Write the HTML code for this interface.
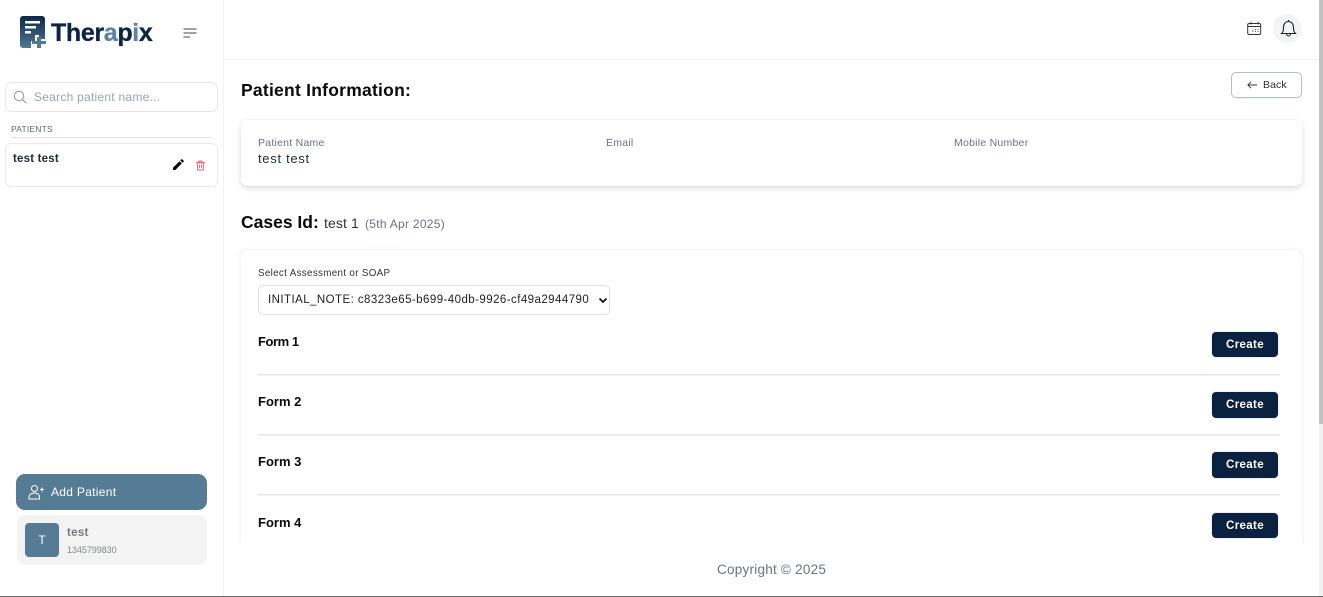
<!DOCTYPE html>
<html><head><meta charset="utf-8"><style>
*{box-sizing:border-box}
html,body{margin:0;padding:0;background:#fff}
body{width:1323px;height:597px;overflow:hidden;position:relative;font-family:"Liberation Sans",sans-serif;color:#000}
.a{position:absolute;white-space:nowrap}
.card{position:absolute;background:#fff;border-radius:7px}
.form{font-size:13px;font-weight:700;color:#0a0a0a;left:258px;letter-spacing:0}
.btn{position:absolute;left:1212px;width:66px;height:25px;background:#0a2240;border-radius:4px;color:#fff;font-size:11.5px;font-weight:700;text-align:center;line-height:26px;letter-spacing:.35px;box-shadow:0 0 0 1px #eceef2}
.hr{position:absolute;left:258px;width:1022px;height:1px;background:#e5e7eb;box-shadow:0 1px 0 #f0f1f4}
.lab{font-size:10.5px;color:#6b7280;top:137px;line-height:13px;letter-spacing:.25px}
</style></head><body>

<!-- sidebar -->
<div class="a" style="left:223px;top:0;width:1px;height:596px;background:#f1f2f4"></div>
<div class="a" style="left:224px;top:59px;width:1095px;height:1px;background:#f1f2f4"></div>

<svg class="a" style="left:20px;top:15px" width="26" height="34" viewBox="0 0 26 34">
<defs><linearGradient id="g" x1="0" y1="0" x2="0" y2="1"><stop offset="0" stop-color="#0d2746"/><stop offset="1" stop-color="#4f7a98"/></linearGradient></defs>
<path d="M3 1H22a3 3 0 0 1 3 3V24H19V20H15V26H11V33H3a3 3 0 0 1-3-3V4a3 3 0 0 1 3-3Z" fill="url(#g)"/>
<path d="M5 6H20V8.500H5ZM5 11H16V13.500H5ZM5 16H11V18.500H5Z" fill="#fff"/>
<path d="M17 22H21V26H26V29H21V33H17V29H12V26H17Z" fill="#4f7a98"/>
</svg>
<div class="a" style="left:51px;top:18px;font-size:25px;line-height:30px;font-weight:700;color:#0c2444;letter-spacing:-.35px;-webkit-text-stroke:.3px #0c2444">Ther<span style="color:#5b86a3;-webkit-text-stroke:.3px #5b86a3">a</span>p<span style="color:#5b86a3;-webkit-text-stroke:.3px #5b86a3">i</span>x</div>
<svg class="a" style="left:183px;top:28px" width="14" height="11" viewBox="0 0 14 11"><path d="M.5 1H13.500M.5 5H13.500M.5 9H7" stroke="#444" stroke-width="1" fill="none"/></svg>

<div class="a" style="left:5px;top:82px;width:213px;height:30px;border:1px solid #e2e5ea;border-radius:7px"></div>
<svg class="a" style="left:13px;top:90px" width="14" height="14" viewBox="0 0 14 14"><circle cx="6" cy="6" r="4.700" fill="none" stroke="#8a94a3" stroke-width="1"/><path d="M9.500 9.500L13 13" stroke="#8a94a3" stroke-width="1"/></svg>
<div class="a" style="left:34px;top:90px;font-size:12px;line-height:15px;color:#9aa2af;letter-spacing:.25px">Search patient name...</div>
<div class="a" style="left:11px;top:124px;font-size:8.500px;line-height:11px;color:#5f6875;letter-spacing:.2px">PATIENTS</div>
<div class="a" style="left:11px;top:137px;width:201px;height:1px;background:#e5e7eb"></div>
<div class="a" style="left:5px;top:143px;width:213px;height:44px;border:1px solid #e8eaee;border-radius:6px"></div>
<div class="a" style="left:13px;top:152px;font-size:11.500px;line-height:15px;font-weight:700;color:#1f2937;letter-spacing:.2px">test test</div>
<svg class="a" style="left:172px;top:159px" width="12" height="12" viewBox="0 0 12 12"><path d="M1 11V8.700L7.500 2.200L9.800 4.500L3.300 11ZM8.300 1.400L9.300.4a.7.7 0 0 1 1 0L11.600 1.700a.7.7 0 0 1 0 1L10.600 3.700Z" fill="#000"/></svg>
<svg class="a" style="left:195px;top:160px" width="11" height="11" viewBox="0 0 11 11"><path d="M1.200 2.500H9.800M4 2.500V1H7V2.500M2.200 2.500L2.700 10H8.300L8.800 2.500M4.400 4.500V8.300M6.600 4.500V8.300" fill="none" stroke="#ef5b5b" stroke-width=".9"/></svg>

<div class="a" style="left:16px;top:474px;width:191px;height:36px;background:#567b95;border-radius:9px"></div>
<svg class="a" style="left:28px;top:484px" width="16" height="16" viewBox="0 0 16 16"><circle cx="6.500" cy="4.500" r="3" fill="none" stroke="#fff" stroke-width="1"/><path d="M1 15V13.500C1 10.500 3.500 9 6.500 9S11.500 10.500 11.500 13.500V15ZM12 5.500H16M14 3.500V7.500" fill="none" stroke="#fff" stroke-width="1"/></svg>
<div class="a" style="left:51px;top:484px;font-size:12px;line-height:16px;color:#fff;letter-spacing:.3px">Add Patient</div>

<div class="a" style="left:17px;top:515px;width:190px;height:50px;background:#f3f3f4;border-radius:8px"></div>
<div class="a" style="left:25px;top:523px;width:34px;height:34px;background:#567b95;border-radius:4px;color:#fff;font-size:12px;text-align:center;line-height:34px">T</div>
<div class="a" style="left:67px;top:526px;font-size:11.500px;line-height:15px;font-weight:700;color:#777a80;letter-spacing:.3px">test</div>
<div class="a" style="left:67px;top:544px;font-size:9px;line-height:12px;color:#85888e;letter-spacing:-.05px">1345799830</div>

<!-- header icons -->
<svg class="a" style="left:1247px;top:21px" width="15" height="15" viewBox="0 0 15 15"><rect x=".7" y="2.500" width="13" height="11" rx="1.500" fill="none" stroke="#333" stroke-width="1"/><path d="M1 5.500H14M4 .8V3.500M11 .8V3.500" stroke="#333" stroke-width="1"/><path d="M5 10H6.500M8 8.500H9M8 10.500H9M10.500 8.500H11.500M10.500 10.500H11.500" stroke="#555" stroke-width="1"/></svg>
<div class="a" style="left:1273px;top:14px;width:29px;height:29px;border-radius:50%;background:#f3f4f6"></div>
<svg class="a" style="left:1280px;top:19px" width="17" height="18" viewBox="0 0 17 18"><path d="M1.500 14.500C3 13 3.500 12 3.500 8.500C3.500 5 5.500 2.500 8.500 2.500S13.500 5 13.500 8.500C13.500 12 14 13 15.500 14.500ZM6.500 14.500C6.500 16 7.500 17 8.500 17S10.500 16 10.500 14.500M8.500 2.500V1" fill="none" stroke="#222" stroke-width="1.100"/></svg>

<div class="a" style="left:1231px;top:72px;width:71px;height:26px;border:1px solid #b9bdc4;border-radius:5px;box-shadow:0 1px 1px rgba(0,0,0,.06)"></div>
<svg class="a" style="left:1247px;top:80px" width="10" height="10" viewBox="0 0 10 10"><path d="M10 5H.8M4 1.800L.8 5L4 8.200" fill="none" stroke="#333" stroke-width=".9"/></svg>
<div class="a" style="left:1263px;top:78px;font-size:10.500px;line-height:14px;color:#333;letter-spacing:.1px">Back</div>

<!-- patient information -->
<div class="a" style="left:241px;top:79px;font-size:17.500px;line-height:22px;font-weight:700;color:#0a0a0a;letter-spacing:.24px">Patient Information:</div>
<div class="card" style="left:241px;top:120px;width:1061px;height:66px;box-shadow:0 2px 6px rgba(0,0,0,.16)"></div>
<div class="a lab" style="left:258px">Patient Name</div>
<div class="a lab" style="left:606px">Email</div>
<div class="a lab" style="left:954px">Mobile Number</div>
<div class="a" style="left:258px;top:151px;font-size:13px;line-height:16px;color:#1f2937;letter-spacing:.7px">test test</div>

<div class="a" style="left:241px;top:211px;font-size:17.500px;line-height:22px;font-weight:700;color:#0a0a0a;letter-spacing:0">Cases Id:</div>
<div class="a" style="left:324px;top:215px;font-size:14px;line-height:17px;color:#333;letter-spacing:.1px">test 1</div>
<div class="a" style="left:365px;top:217px;font-size:12px;line-height:15px;color:#6b7280;letter-spacing:.28px">(5th Apr 2025)</div>

<!-- cases card -->
<div class="card" style="left:241px;top:250px;width:1061px;height:294px;border-radius:7px 7px 0 0;box-shadow:0 0 5px rgba(0,0,0,.09);clip-path:inset(-8px -8px 0 -8px)"></div>
<div class="a" style="left:258px;top:267px;font-size:9.800px;line-height:13px;color:#333;letter-spacing:.33px">Select Assessment or SOAP</div>
<div class="a" style="left:258px;top:285px;width:352px;height:30px;border:1px solid #dcdfe4;border-radius:5px"></div>
<div class="a" style="left:268px;top:293px;font-size:11.500px;line-height:14px;color:#222;letter-spacing:.44px">INITIAL_NOTE: c8323e65-b699-40db-9926-cf49a2944790</div>
<svg class="a" style="left:598px;top:297px" width="10" height="7" viewBox="0 0 10 7"><path d="M1.500 1.500L5 5L8.500 1.500" fill="none" stroke="#111" stroke-width="1.700"/></svg>

<div class="a form" style="top:334px;line-height:16px;letter-spacing:-.45px">Form 1</div>
<div class="btn" style="top:332px">Create</div>
<div class="hr" style="top:374px"></div>
<div class="a form" style="top:394px;line-height:16px">Form 2</div>
<div class="btn" style="top:392px;height:26px">Create</div>
<div class="hr" style="top:434px"></div>
<div class="a form" style="top:454px;line-height:16px">Form 3</div>
<div class="btn" style="top:452px;height:26px">Create</div>
<div class="hr" style="top:494px"></div>
<div class="a form" style="top:515px;line-height:16px">Form 4</div>
<div class="btn" style="top:513px">Create</div>

<div class="a" style="left:717px;top:562px;font-size:13.500px;line-height:16px;color:#6b7280;letter-spacing:.24px">Copyright © 2025</div>

<!-- scrollbar and bottom edge -->
<div class="a" style="left:1319px;top:0;width:4px;height:596px;background:#f1f1f1"></div>
<div class="a" style="left:1319px;top:0;width:4px;height:424px;background:#c1c1c1"></div>
<div class="a" style="left:0;top:596px;width:1323px;height:1px;background:#666"></div>
</body></html>
